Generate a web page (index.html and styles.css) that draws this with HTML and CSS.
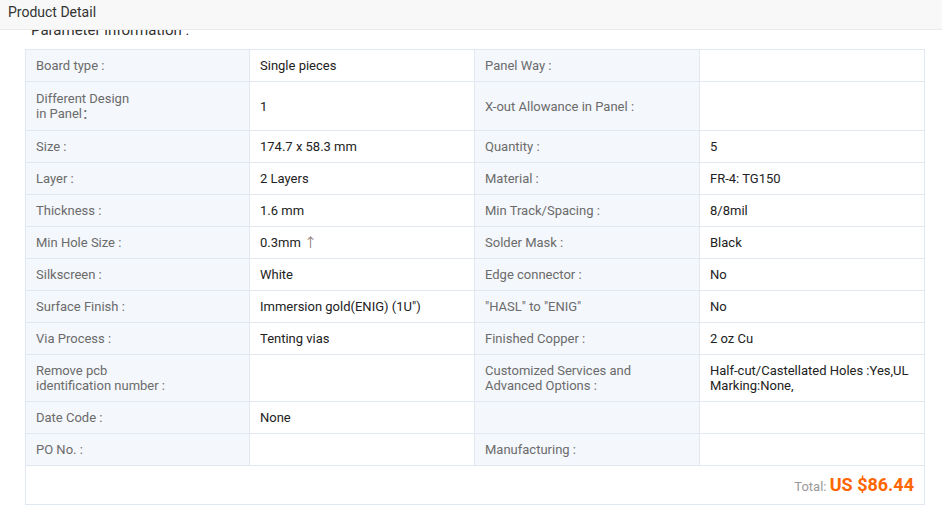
FILE: index.html
```html
<!DOCTYPE html>
<html lang="en">
<head>
<meta charset="utf-8">
<title>Product Detail</title>
<link rel="stylesheet" href="styles.css">
</head>
<body>
<div class="header">Product Detail</div>
<div class="content">
  <div class="title">Parameter information :</div>
  <table class="params">
    <colgroup><col class="c1"><col class="c"><col class="c"><col class="c"></colgroup>
    <tr><td class="lbl">Board type :</td><td class="val">Single pieces</td><td class="lbl">Panel Way :</td><td class="val"></td></tr>
    <tr class="tall"><td class="lbl">Different Design<br>in Panel：</td><td class="val">1</td><td class="lbl">X-out Allowance in Panel :</td><td class="val"></td></tr>
    <tr><td class="lbl">Size :</td><td class="val">174.7 x 58.3 mm</td><td class="lbl">Quantity :</td><td class="val">5</td></tr>
    <tr><td class="lbl">Layer :</td><td class="val">2 Layers</td><td class="lbl">Material :</td><td class="val">FR-4: TG150</td></tr>
    <tr><td class="lbl">Thickness :</td><td class="val">1.6 mm</td><td class="lbl">Min Track/Spacing :</td><td class="val">8/8mil</td></tr>
    <tr><td class="lbl">Min Hole Size :</td><td class="val">0.3mm <span class="arrow">↑</span></td><td class="lbl">Solder Mask :</td><td class="val">Black</td></tr>
    <tr><td class="lbl">Silkscreen :</td><td class="val">White</td><td class="lbl">Edge connector :</td><td class="val">No</td></tr>
    <tr><td class="lbl">Surface Finish :</td><td class="val">Immersion gold(ENIG) (1U")</td><td class="lbl">"HASL" to "ENIG"</td><td class="val">No</td></tr>
    <tr><td class="lbl">Via Process :</td><td class="val">Tenting vias</td><td class="lbl">Finished Copper :</td><td class="val">2 oz Cu</td></tr>
    <tr><td class="lbl">Remove pcb<br>identification number :</td><td class="val"></td><td class="lbl">Customized Services and Advanced Options :</td><td class="val">Half-cut/Castellated Holes :Yes,UL Marking:None,</td></tr>
    <tr><td class="lbl">Date Code :</td><td class="val">None</td><td class="lbl"></td><td class="val"></td></tr>
    <tr><td class="lbl">PO No. :</td><td class="val"></td><td class="lbl">Manufacturing :</td><td class="val"></td></tr>
    <tr><td class="total" colspan="4"><span class="total-label">Total: </span><span class="total-price">US $86.44</span></td></tr>
  </table>
</div>
</body>
</html>
```
FILE: styles.css
```css
html, body {
  margin: 0;
  padding: 0;
  background: #ffffff;
  font-family: Roboto, "Noto Sans CJK SC", sans-serif;
  color: #333333;
}
.header {
  height: 25px;
  padding: 4px 0 0 8px;
  font-size: 14px;
  line-height: 16px;
  color: #333333;
  background: #f8f8f8;
  border-bottom: 1px solid #ebebeb;
}
.content {
  height: 478px;
  overflow: hidden;
  padding: 0 17px 0 25px;
}
.title {
  margin: -10px 0 9px 0;
  padding-left: 6px;
  font-size: 15px;
  line-height: 20px;
  color: #333333;
}
.params {
  width: 899px;
  border-collapse: collapse;
  table-layout: fixed;
  border: 1px solid #e2e8f2;
  font-size: 13px;
  line-height: 15px;
}
.params .c1 { width: 224px; }
.params .c { width: 225px; }
.params td {
  border: 1px solid #e2e8f2;
  padding: 8px 10px;
  vertical-align: middle;
}
.params .tall td {
  padding-top: 9px;
  padding-bottom: 9px;
}
.lbl {
  background: #f4f7fc;
  color: #6b6b6b;
}
.val {
  background: #ffffff;
  color: #222222;
}
.arrow { color: #8c7b72; }
.params td.total {
  text-align: right;
  padding: 8px 10px;
  font-size: 18px;
  line-height: 22px;
  background: #ffffff;
}
.total-label {
  font-size: 13px;
  line-height: 13px;
  color: #999999;
}
.total-price {
  font-size: 18px;
  font-weight: bold;
  color: #ff6600;
}
```
